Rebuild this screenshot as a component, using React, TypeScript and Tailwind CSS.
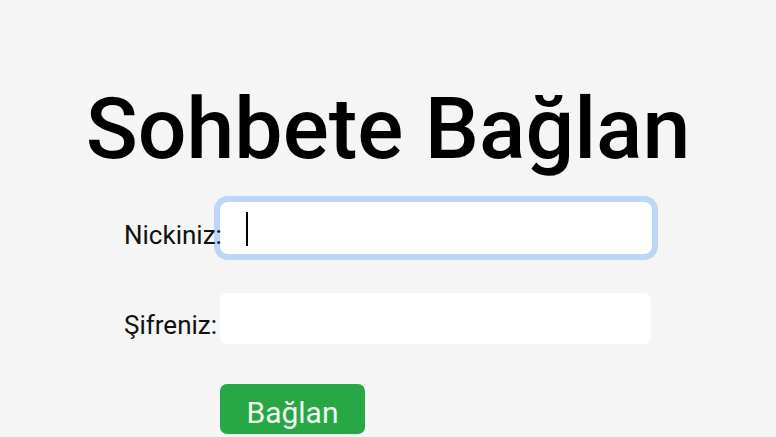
export default function App() {
  return (
    <div className="min-h-[437px] w-full bg-[#f5f5f5] font-['Roboto',sans-serif] text-black overflow-hidden">
      <h1 className="pt-[86px] text-center text-[86px] font-medium leading-none">
        Sohbete Bağlan
      </h1>
      <div className="mx-auto mt-[30px] w-[528px] flex flex-col">
        <div className="flex items-center">
          <label className="relative z-10 w-[96px] pt-[14px] text-[26px] leading-none text-[#111]">Nickiniz:</label>
          <div className="relative">
            <input
              type="text"
              className="block h-[52px] w-[432px] rounded-[8px] bg-white px-[24px] text-[26px] outline-none ring-[6px] ring-[#bcd7f5]"
            />
            <span className="absolute left-[26px] top-[10px] h-[34px] w-[2px] bg-black" />
          </div>
        </div>
        <div className="mt-[39px] flex items-center">
          <label className="w-[96px] pt-[12px] text-[26px] leading-none text-[#111]">Şifreniz:</label>
          <input
            type="password"
            className="block h-[51px] w-[431px] rounded-[7px] bg-white px-[24px] text-[26px] outline-none"
          />
        </div>
        <div className="ml-[96px] mt-[40px]">
          <button className="h-[50px] w-[145px] rounded-[7px] bg-[#28a745] pt-[8px] text-[30px] leading-none text-[#f1f8f1]">
            Bağlan
          </button>
        </div>
      </div>
    </div>
  );
}
